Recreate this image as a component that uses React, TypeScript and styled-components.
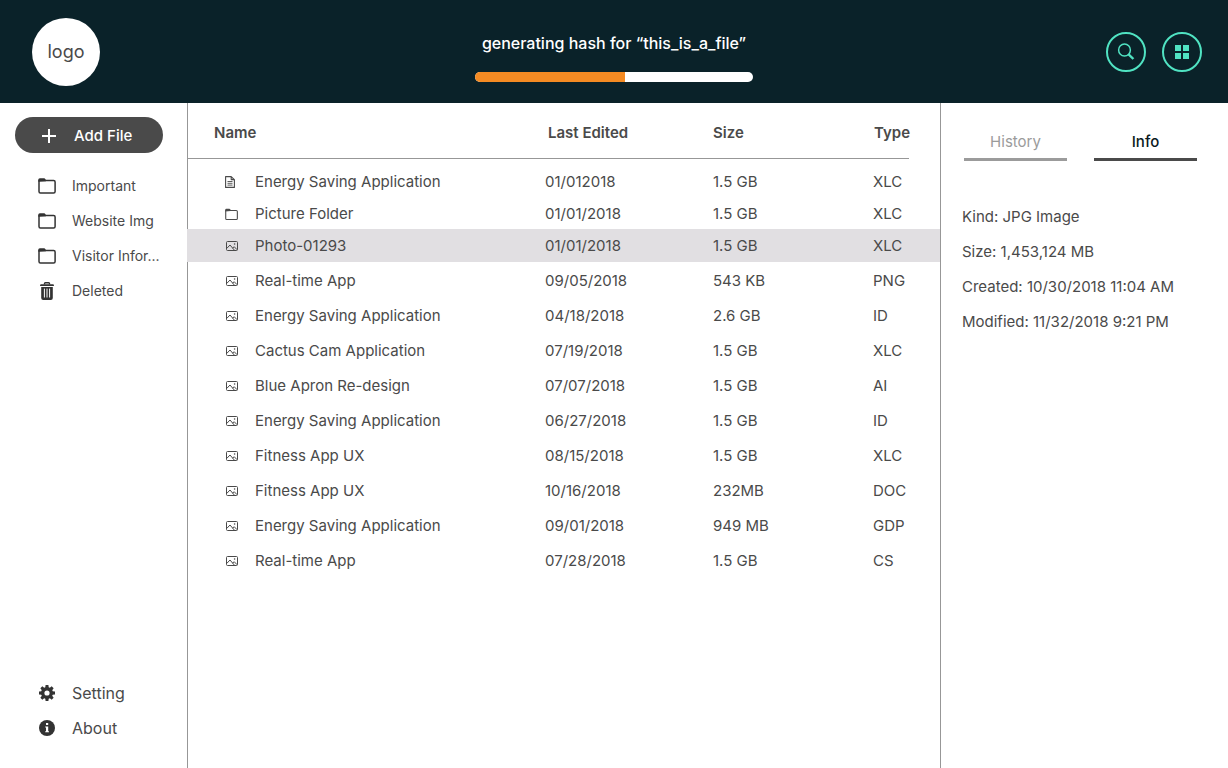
import React from "react";
import styled, { createGlobalStyle } from "styled-components";

const GlobalStyle = createGlobalStyle`
  *, *::before, *::after { box-sizing: border-box; }
  body {
    margin: 0;
    background: #fff;
    color: #4a4a4a;
    font-family: Inter, Roboto, "Liberation Sans", sans-serif;
    font-size: 15px;
    line-height: 20px;
  }
  button { font: inherit; color: inherit; border: 0; padding: 0; background: none; cursor: pointer; }
`;

const Page = styled.div`
  display: flex;
  flex-direction: column;
  min-height: 100vh;
`;

const Header = styled.header`
  display: grid;
  grid-template-columns: 1fr 278px 1fr;
  align-items: center;
  height: 103px;
  padding: 0 26px;
  background: #0a2229;
`;

const Logo = styled.a`
  display: flex;
  align-items: center;
  justify-content: center;
  width: 68px;
  height: 68px;
  margin-left: 6px;
  border-radius: 50%;
  background: #fff;
  color: #4a4a4a;
  font-size: 18px;
  text-decoration: none;
`;

const Status = styled.div`
  display: flex;
  flex-direction: column;
  align-items: center;
  gap: 19px;
  margin-top: 12px;
  color: #fff;
  font-size: 16px;
  font-weight: 500;
  white-space: nowrap;
`;

const Track = styled.div`
  width: 100%;
  height: 10px;
  border-radius: 5px;
  background: #fff;
  overflow: hidden;
`;

const Fill = styled.div`
  height: 100%;
  background: #f48b23;
`;

const Actions = styled.div`
  display: flex;
  justify-content: flex-end;
  gap: 16px;
`;

const RoundButton = styled.button`
  display: flex;
  align-items: center;
  justify-content: center;
  width: 40px;
  height: 40px;
  border: 2px solid #50e3c2;
  border-radius: 50%;
  color: #50e3c2;
`;

const Body = styled.div`
  flex: 1;
  display: grid;
  grid-template-columns: 187px minmax(0, 1fr) 288px;
`;

const Sidebar = styled.nav`
  display: flex;
  flex-direction: column;
  padding: 14px 15px 23px;
`;

const AddButton = styled.button`
  display: flex;
  align-items: center;
  gap: 18px;
  width: 148px;
  height: 36px;
  padding: 1px 0 0 27px;
  margin-bottom: 15px;
  border-radius: 18px;
  background: #4a4a4a;
  color: #fff;
  font-weight: 500;
`;

const NavLink = styled.a<{ $small?: boolean }>`
  display: flex;
  align-items: center;
  gap: 16px;
  height: 35px;
  padding-left: 23px;
  color: #4a4a4a;
  font-size: ${(p) => (p.$small ? 14 : 16)}px;
  text-decoration: none;
  white-space: nowrap;
  svg { flex: none; color: #333; }
`;

const Footer = styled.div`
  margin-top: auto;
`;

const Files = styled.main`
  background: linear-gradient(#979797, #979797) left / 1px 100% no-repeat;
`;

const Table = styled.table`
  width: 100%;
  table-layout: fixed;
  border-collapse: collapse;
`;

const HeadRow = styled.tr`
  height: 62px;
  background: linear-gradient(#979797, #979797) 0 55px / calc(100% - 31px) 1px no-repeat;
`;

const HeadCell = styled.th<{ $width?: number; $inset?: number }>`
  width: ${(p) => (p.$width ? `${p.$width}px` : "auto")};
  padding: 20px 0 0 ${(p) => p.$inset || 0}px;
  font-weight: 600;
  text-align: left;
  vertical-align: top;
`;

const Row = styled.tr<{ $compact?: boolean; $selected?: boolean }>`
  height: ${(p) => (p.$selected ? 33 : p.$compact ? 32 : 35)}px;
  background: ${(p) => (p.$selected ? "#e1dfe2" : "transparent")};
  td { padding: ${(p) => (p.$selected ? 0 : 2)}px 0 0; }
`;

const NameCell = styled.div`
  display: flex;
  align-items: center;
  padding-left: 37px;
  white-space: nowrap;
`;

const IconSlot = styled.span<{ $indent: number }>`
  display: flex;
  width: 31px;
  padding-left: ${(p) => p.$indent}px;
`;

const Details = styled.aside`
  border-left: 1px solid #979797;
  padding: 26px 22px 0 21px;
`;

const Tabs = styled.div`
  display: flex;
  gap: 27px;
  padding-left: 2px;
  margin-bottom: 46px;
`;

const Tab = styled.button<{ $active?: boolean }>`
  width: 103px;
  height: 32px;
  padding-bottom: 4px;
  border-bottom: 3px solid ${(p) => (p.$active ? "#4a4a4a" : "#9b9b9b")};
  color: ${(p) => (p.$active ? "#0a1a20" : "#9b9b9b")};
  font-weight: ${(p) => (p.$active ? 500 : 400)};
`;

const Facts = styled.ul`
  display: flex;
  flex-direction: column;
  gap: 15px;
  margin: 0;
  padding: 0;
  list-style: none;
  white-space: nowrap;
`;

const FolderIcon = ({ size = 18 }: { size?: number }) => (
  <svg width={size} height={size} viewBox="0 0 18 18" fill="none" aria-hidden="true">
    <path d="M.3 4.8V2.8Q.3 1.2 1.8 1.2H6Q7 1.2 7.4 2.2L8 4.2Z" fill="currentColor" />
    <path d="M1 3.4H15.6Q17.1 3.4 17.1 4.9V14.4Q17.1 15.9 15.6 15.9H2.4Q1 15.9 1 14.4Z" stroke="currentColor" strokeWidth="1.5" strokeLinejoin="round" />
  </svg>
);

const TrashIcon = () => (
  <svg width="18" height="18" viewBox="0 0 18 18" fill="none" aria-hidden="true">
    <path d="M6.5 2.6V1.6Q6.5.8 7.3.8H10.7Q11.5.8 11.5 1.6V2.6" stroke="currentColor" strokeWidth="1.4" />
    <path d="M2.8 2.2H15.2Q16 2.4 16 4H2Q2 2.4 2.8 2.2Z" fill="currentColor" />
    <path d="M3.2 5H14.8V16Q14.8 18 12.8 18H5.2Q3.2 18 3.2 16Z" fill="currentColor" />
    <path d="M6.4 6.6V15.5M9 6.6V15.5M11.6 6.6V15.5" stroke="#fff" strokeWidth="1" />
  </svg>
);

const GearIcon = () => (
  <svg width="18" height="18" viewBox="0 0 18 18" fill="none" aria-hidden="true">
    <circle cx="9" cy="9" r="4.3" stroke="currentColor" strokeWidth="3.4" />
    {[0, 45, 90, 135].map((a) => (
      <path key={a} d="M7.2 4L7.6 1H10.4L10.8 4ZM7.2 14L7.6 17H10.4L10.8 14Z" fill="currentColor" transform={`rotate(${a} 9 9)`} />
    ))}
  </svg>
);

const InfoIcon = () => (
  <svg width="18" height="18" viewBox="0 0 18 18" aria-hidden="true">
    <circle cx="9" cy="9" r="8" fill="currentColor" />
    <path d="M8 4H10.2V6H8ZM7.2 7.4H10.2V12.2H11V13.3H7.2V12.2H8V8.5H7.2Z" fill="#fff" />
  </svg>
);

const PhotoIcon = () => (
  <svg width="12" height="12" viewBox="0 0 12 12" fill="none" stroke="currentColor" aria-hidden="true">
    <rect x=".5" y="1.5" width="11" height="9" rx="1" />
    <path d="M.8 8.4L4 5L8.6 10.4M6.5 8L8.3 6.8L11.2 9.8" />
    <circle cx="8.6" cy="4" r=".8" fill="currentColor" stroke="none" />
  </svg>
);

const DocIcon = () => (
  <svg width="10" height="12" viewBox="0 0 10 12" fill="none" stroke="currentColor" aria-hidden="true">
    <path d="M.6.6H6.2L9.4 3.6V11.4H.6ZM6.2.6V3.6H9.4" strokeWidth="1.1" strokeLinejoin="round" />
    <path d="M2.5 5.5H7.5M2.5 7.3H7.5M2.5 9.1H7.5" strokeWidth=".9" />
  </svg>
);

const PlusIcon = () => (
  <svg width="14" height="14" viewBox="0 0 14 14" stroke="currentColor" strokeWidth="2" aria-hidden="true">
    <path d="M7 0V14M0 7H14" />
  </svg>
);

const SearchIcon = () => (
  <svg width="18" height="18" viewBox="0 0 18 18" fill="none" stroke="currentColor" aria-hidden="true">
    <circle cx="7.5" cy="7" r="5.9" strokeWidth="1.5" />
    <path d="M11.6 11.3L16.4 16" strokeWidth="2.4" />
  </svg>
);

const GridIcon = () => (
  <svg width="14" height="14" viewBox="0 0 14 14" fill="currentColor" aria-hidden="true">
    <path d="M0 0H6V6H0ZM8 0H14V6H8ZM0 8H6V14H0ZM8 8H14V14H8Z" />
  </svg>
);

type Kind = "doc" | "folder" | "photo";

const files: [Kind, string, string, string, string][] = [
  ["doc", "Energy Saving Application", "01/012018", "1.5 GB", "XLC"],
  ["folder", "Picture Folder", "01/01/2018", "1.5 GB", "XLC"],
  ["photo", "Photo-01293", "01/01/2018", "1.5 GB", "XLC"],
  ["photo", "Real-time App", "09/05/2018", "543 KB", "PNG"],
  ["photo", "Energy Saving Application", "04/18/2018", "2.6 GB", "ID"],
  ["photo", "Cactus Cam Application", "07/19/2018", "1.5 GB", "XLC"],
  ["photo", "Blue Apron Re-design", "07/07/2018", "1.5 GB", "AI"],
  ["photo", "Energy Saving Application", "06/27/2018", "1.5 GB", "ID"],
  ["photo", "Fitness App UX", "08/15/2018", "1.5 GB", "XLC"],
  ["photo", "Fitness App UX", "10/16/2018", "232MB", "DOC"],
  ["photo", "Energy Saving Application", "09/01/2018", "949 MB", "GDP"],
  ["photo", "Real-time App", "07/28/2018", "1.5 GB", "CS"],
];

const kindIcon = {
  doc: <DocIcon />,
  folder: <FolderIcon size={13} />,
  photo: <PhotoIcon />,
};

const kindIndent = { doc: 1, folder: 1, photo: 2 };

const selected = 2;
const progress = 54;

export default function App() {
  return (
    <Page>
      <GlobalStyle />
      <Header>
        <Logo href="#">logo</Logo>
        <Status>
          <span>generating hash for “this_is_a_file”</span>
          <Track role="progressbar" aria-label="Hash progress" aria-valuenow={progress} aria-valuemin={0} aria-valuemax={100}>
            <Fill style={{ width: `${progress}%` }} />
          </Track>
        </Status>
        <Actions>
          <RoundButton aria-label="Search"><SearchIcon /></RoundButton>
          <RoundButton aria-label="Grid view"><GridIcon /></RoundButton>
        </Actions>
      </Header>
      <Body>
        <Sidebar>
          <AddButton><PlusIcon />Add File</AddButton>
          <NavLink href="#" $small><FolderIcon />Important</NavLink>
          <NavLink href="#" $small><FolderIcon />Website Img</NavLink>
          <NavLink href="#" $small><FolderIcon />Visitor Infor...</NavLink>
          <NavLink href="#" $small><TrashIcon />Deleted</NavLink>
          <Footer>
            <NavLink href="#"><GearIcon />Setting</NavLink>
            <NavLink href="#"><InfoIcon />About</NavLink>
          </Footer>
        </Sidebar>
        <Files>
          <Table>
            <thead>
              <HeadRow>
                <HeadCell $inset={27}>Name</HeadCell>
                <HeadCell $width={168} $inset={3}>Last Edited</HeadCell>
                <HeadCell $width={160}>Size</HeadCell>
                <HeadCell $width={67} $inset={1}>Type</HeadCell>
              </HeadRow>
            </thead>
            <tbody>
              {files.map(([kind, name, edited, size, type], i) => (
                <Row key={i} $compact={i <= selected} $selected={i === selected}>
                  <td>
                    <NameCell>
                      <IconSlot $indent={kindIndent[kind]}>{kindIcon[kind]}</IconSlot>
                      {name}
                    </NameCell>
                  </td>
                  <td>{edited}</td>
                  <td>{size}</td>
                  <td>{type}</td>
                </Row>
              ))}
            </tbody>
          </Table>
        </Files>
        <Details>
          <Tabs role="tablist">
            <Tab role="tab" aria-selected={false}>History</Tab>
            <Tab role="tab" aria-selected $active>Info</Tab>
          </Tabs>
          <Facts>
            <li>Kind: JPG Image</li>
            <li>Size: 1,453,124 MB</li>
            <li>Created: 10/30/2018 11:04 AM</li>
            <li>Modified: 11/32/2018 9:21 PM</li>
          </Facts>
        </Details>
      </Body>
    </Page>
  );
}
